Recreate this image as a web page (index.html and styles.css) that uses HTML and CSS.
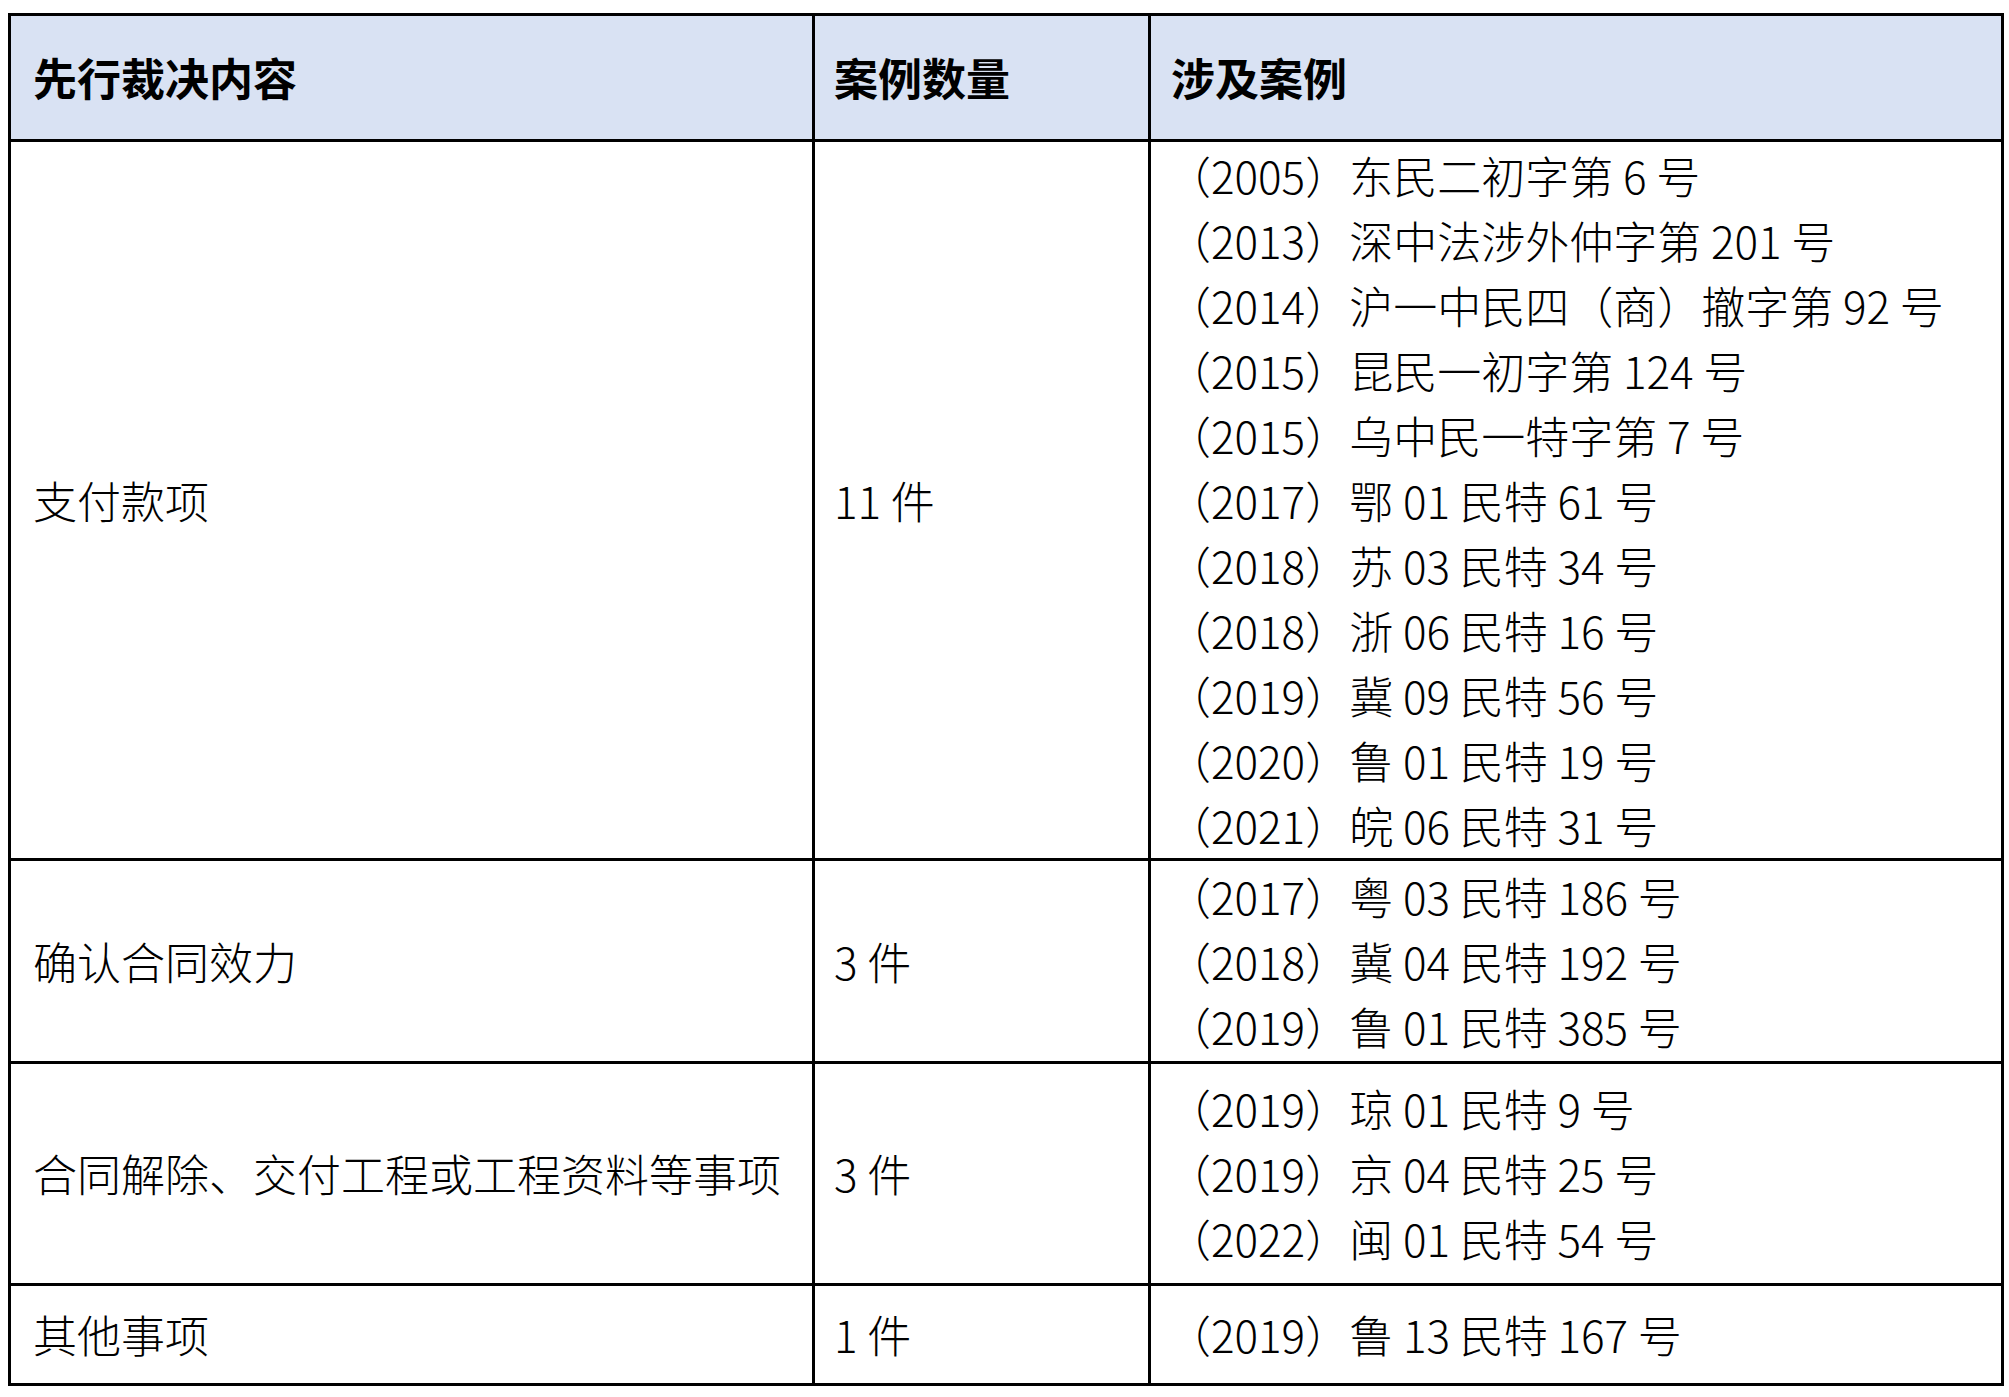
FILE: index.html
```html
<!DOCTYPE html>
<html lang="zh-CN">
<head>
<meta charset="utf-8">
<title>先行裁决案例</title>
<link rel="stylesheet" href="styles.css">
</head>
<body>
<div class="page">
  <table class="rulings">
    <colgroup>
      <col class="c-content">
      <col class="c-count">
      <col class="c-cases">
    </colgroup>
    <thead>
      <tr class="row-head">
        <th>先行裁决内容</th>
        <th class="count">案例数量</th>
        <th class="cases-head">涉及案例</th>
      </tr>
    </thead>
    <tbody>
      <tr class="row-a">
        <td>支付款项</td>
        <td class="count">11 件</td>
        <td class="cases">
          <div class="case">（2005）东民二初字第 6 号</div>
          <div class="case">（2013）深中法涉外仲字第 201 号</div>
          <div class="case">（2014）沪一中民四（商）撤字第 92 号</div>
          <div class="case">（2015）昆民一初字第 124 号</div>
          <div class="case">（2015）乌中民一特字第 7 号</div>
          <div class="case">（2017）鄂 01 民特 61 号</div>
          <div class="case">（2018）苏 03 民特 34 号</div>
          <div class="case">（2018）浙 06 民特 16 号</div>
          <div class="case">（2019）冀 09 民特 56 号</div>
          <div class="case">（2020）鲁 01 民特 19 号</div>
          <div class="case">（2021）皖 06 民特 31 号</div>
        </td>
      </tr>
      <tr class="row-b">
        <td>确认合同效力</td>
        <td class="count">3 件</td>
        <td class="cases">
          <div class="case">（2017）粤 03 民特 186 号</div>
          <div class="case">（2018）冀 04 民特 192 号</div>
          <div class="case">（2019）鲁 01 民特 385 号</div>
        </td>
      </tr>
      <tr class="row-c">
        <td>合同解除、交付工程或工程资料等事项</td>
        <td class="count">3 件</td>
        <td class="cases">
          <div class="case">（2019）琼 01 民特 9 号</div>
          <div class="case">（2019）京 04 民特 25 号</div>
          <div class="case">（2022）闽 01 民特 54 号</div>
        </td>
      </tr>
      <tr class="row-d">
        <td>其他事项</td>
        <td class="count">1 件</td>
        <td class="cases">
          <div class="case">（2019）鲁 13 民特 167 号</div>
        </td>
      </tr>
    </tbody>
  </table>
</div>
</body>
</html>
```

FILE: styles.css
```css
html, body {
  margin: 0;
  padding: 0;
  background: #ffffff;
}

.page {
  padding: 13px 0 0 8px;
}

.rulings {
  border-collapse: collapse;
  table-layout: fixed;
  width: 1993px;
  border: 3px solid #000;
  font-family: "Noto Sans CJK SC", "Noto Sans", sans-serif;
  font-size: 44px;
  color: #000;
}

.c-content { width: 804px; }
.c-count { width: 336px; }
.c-cases { width: 853px; }

.rulings th,
.rulings td {
  border: 3px solid #000;
  padding: 0 10px 0 22px;
  text-align: left;
  vertical-align: middle;
  white-space: nowrap;
  line-height: 65px;
}

.rulings th {
  background: #d9e2f3;
  font-weight: 700;
}

.rulings td {
  font-weight: 300;
}

.rulings .count {
  padding-left: 19px;
}

.rulings .cases-head {
  padding-left: 20px;
}

.rulings .cases {
  padding-left: 16px;
}

.row-head { height: 126px; }
.row-a { height: 719px; }
.row-b { height: 203px; }
.row-c { height: 222px; }
.row-d { height: 100px; }

.case {
  display: block;
  line-height: 65px;
}
```
